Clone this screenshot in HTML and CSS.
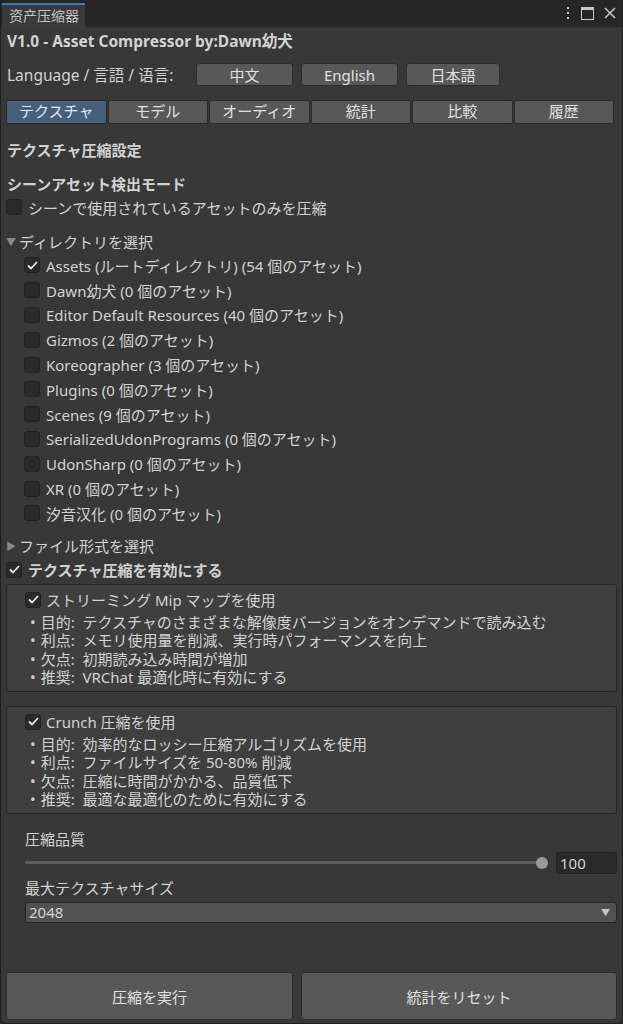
FILE: index.html
```html
<!DOCTYPE html>
<html lang="ja">
<head>
<meta charset="utf-8">
<title>资产压缩器</title>
<link rel="stylesheet" href="styles.css">
</head>
<body>
<div class="window">
  <div class="titlebar">
    <div class="wintab">资产压缩器</div>
    <div class="winctrls">
      <svg class="ico" width="6" height="14" viewBox="0 0 6 14"><rect x="2" y="1" width="2" height="2" fill="#c8c8c8"/><rect x="2" y="6" width="2" height="2" fill="#c8c8c8"/><rect x="2" y="11" width="2" height="2" fill="#c8c8c8"/></svg>
      <svg class="ico" width="13" height="13" viewBox="0 0 13 13"><rect x="0.5" y="0.5" width="12" height="12" fill="none" stroke="#c8c8c8"/><rect x="0.5" y="0.5" width="12" height="2.5" fill="#c8c8c8"/></svg>
      <svg class="ico" width="12" height="12" viewBox="0 0 12 12"><path d="M1 1 L11 11 M11 1 L1 11" stroke="#c8c8c8" stroke-width="1.5"/></svg>
    </div>
  </div>
  <div class="content">
    <div class="version">V1.0 - Asset Compressor by:Dawn幼犬</div>
    <div class="langrow">
      <span class="langlabel">Language / 言語 / 语言:</span>
      <button class="btn langbtn">中文</button>
      <button class="btn langbtn">English</button>
      <button class="btn langbtn">日本語</button>
    </div>
    <div class="tabs">
      <div class="tab active">テクスチャ</div>
      <div class="tab">モデル</div>
      <div class="tab">オーディオ</div>
      <div class="tab">統計</div>
      <div class="tab">比較</div>
      <div class="tab">履歴</div>
    </div>
    <div class="heading h1">テクスチャ圧縮設定</div>
    <div class="heading h2">シーンアセット検出モード</div>
    <label class="check row-scene"><span class="cb"></span><span>シーンで使用されているアセットのみを圧縮</span></label>
    <div class="foldout open"><span class="tri">▼</span>ディレクトリを選択</div>
    <div class="dirlist">
      <label class="check item"><span class="cb on"><svg width="11" height="9" viewBox="0 0 11 9"><path d="M1 4.5 L4 7.5 L10 1" fill="none" stroke="#e8e8e8" stroke-width="1.8"/></svg></span><span>Assets (ルートディレクトリ) (54 個のアセット)</span></label>
      <label class="check item"><span class="cb"></span><span>Dawn幼犬 (0 個のアセット)</span></label>
      <label class="check item"><span class="cb"></span><span>Editor Default Resources (40 個のアセット)</span></label>
      <label class="check item"><span class="cb"></span><span>Gizmos (2 個のアセット)</span></label>
      <label class="check item"><span class="cb"></span><span>Koreographer (3 個のアセット)</span></label>
      <label class="check item"><span class="cb"></span><span>Plugins (0 個のアセット)</span></label>
      <label class="check item"><span class="cb"></span><span>Scenes (9 個のアセット)</span></label>
      <label class="check item"><span class="cb"></span><span>SerializedUdonPrograms (0 個のアセット)</span></label>
      <label class="check item"><span class="cb"></span><span>UdonSharp (0 個のアセット)</span></label>
      <label class="check item"><span class="cb"></span><span>XR (0 個のアセット)</span></label>
      <label class="check item"><span class="cb"></span><span>汐音汉化 (0 個のアセット)</span></label>
    </div>
    <div class="foldout closed"><span class="tri">▶</span>ファイル形式を選択</div>
    <label class="check enable"><span class="cb on"><svg width="11" height="9" viewBox="0 0 11 9"><path d="M1 4.5 L4 7.5 L10 1" fill="none" stroke="#e8e8e8" stroke-width="1.8"/></svg></span><span>テクスチャ圧縮を有効にする</span></label>

    <div class="box">
      <label class="check boxcheck"><span class="cb on"><svg width="11" height="9" viewBox="0 0 11 9"><path d="M1 4.5 L4 7.5 L10 1" fill="none" stroke="#e8e8e8" stroke-width="1.8"/></svg></span><span>ストリーミング Mip マップを使用</span></label>
      <ul class="bullets">
        <li>目的:&nbsp; テクスチャのさまざまな解像度バージョンをオンデマンドで読み込む</li>
        <li>利点:&nbsp; メモリ使用量を削減、実行時パフォーマンスを向上</li>
        <li>欠点:&nbsp; 初期読み込み時間が増加</li>
        <li>推奨:&nbsp; VRChat 最適化時に有効にする</li>
      </ul>
    </div>

    <div class="box">
      <label class="check boxcheck"><span class="cb on"><svg width="11" height="9" viewBox="0 0 11 9"><path d="M1 4.5 L4 7.5 L10 1" fill="none" stroke="#e8e8e8" stroke-width="1.8"/></svg></span><span>Crunch 圧縮を使用</span></label>
      <ul class="bullets">
        <li>目的:&nbsp; 効率的なロッシー圧縮アルゴリズムを使用</li>
        <li>利点:&nbsp; ファイルサイズを 50-80% 削減</li>
        <li>欠点:&nbsp; 圧縮に時間がかかる、品質低下</li>
        <li>推奨:&nbsp; 最適な最適化のために有効にする</li>
      </ul>
    </div>

    <div class="settings">
      <div class="label">圧縮品質</div>
      <div class="sliderrow">
        <div class="slider"><div class="track"></div><div class="knob"></div></div>
        <div class="numfield">100</div>
      </div>
      <div class="label label2">最大テクスチャサイズ</div>
      <div class="dropdown"><span>2048</span><span class="arrow">▼</span></div>
    </div>

    <div class="actions">
      <button class="btn bigbtn left">圧縮を実行</button>
      <button class="btn bigbtn right">統計をリセット</button>
    </div>
  </div>
</div>
</body>
</html>
```
FILE: styles.css
```css
* { box-sizing: border-box; }
html, body { margin: 0; padding: 0; background: #2a2a2a; }
body {
  font-family: "Noto Sans", "Noto Sans CJK JP", sans-serif;
  font-size: 15px;
  color: #d2d2d2;
}
.window {
  width: 623px;
  height: 1024px;
  background: #383838;
  display: flex;
  flex-direction: column;
  border-left: 1px solid #1f1f1f;
  border-right: 1px solid #1f1f1f;
  border-bottom: 1px solid #1f1f1f;
  border-radius: 0 0 6px 6px;
  overflow: hidden;
}
.titlebar {
  height: 27px;
  background: #262626;
  display: flex;
  align-items: flex-end;
  justify-content: space-between;
  padding: 0 6px 0 1px;
  flex: none;
}
.wintab {
  height: 24px;
  width: 83px;
  background: #3a3a3a;
  border-top: 2px solid #3d78b8;
  color: #c4c4c4;
  font-size: 14px;
  font-family: "Noto Sans CJK SC", sans-serif;
  padding: 0 0 0 7px;
  line-height: 21px;
}
.winctrls {
  display: flex;
  align-items: center;
  gap: 10px;
  height: 27px;
  padding-bottom: 1px;
}
.content {
  flex: 1;
  display: flex;
  flex-direction: column;
  padding: 0 5px 3px 5px;
}
.version {
  font-weight: bold;
  font-size: 15.5px;
  margin-top: 4px;
  height: 20px;
  line-height: 20px;
  padding-left: 1px;
}
.langrow {
  display: flex;
  align-items: center;
  margin-top: 12px;
  height: 23px;
}
.langlabel { width: 190px; padding-left: 1px; font-size: 15.5px; }
.btn {
  font-family: inherit;
  background: #585858;
  color: #e0e0e0;
  border: 1px solid #2e2e2e;
  border-radius: 3px;
  font-size: 15px;
  padding: 0;
  cursor: pointer;
}
.langbtn { width: 97px; height: 23px; margin-right: 8px; line-height: 20px; }
.langbtn:last-child { width: 94px; }
.tabs {
  display: flex;
  margin-top: 14px;
  height: 24px;
  gap: 1px;
  width: 608px;
}
.tab {
  flex: 1;
  background: #585858;
  border: 1px solid #2a2a2a;
  border-radius: 2px;
  text-align: center;
  line-height: 21px;
  color: #e0e0e0;
}
.tab.active { background: #46607c; color: #e8e8e8; }
.heading { font-weight: bold; padding-left: 1px; }
.h1 { margin-top: 15px; height: 22px; line-height: 22px; }
.h2 { margin-top: 12px; height: 22px; line-height: 22px; }
.check { display: flex; align-items: center; gap: 6px; }
.cb {
  width: 16px;
  height: 16px;
  background: #2a2a2a;
  border: 1px solid #222;
  border-radius: 3px;
  display: flex;
  align-items: center;
  justify-content: center;
  flex: none;
}
.row-scene { height: 24px; }
.foldout {
  display: flex;
  align-items: center;
  height: 24px;
  color: #d2d2d2;
}
.foldout.open { margin-top: 10px; }
.tri { color: #8a8a8a; font-size: 10px; width: 13px; }
.foldout.closed { margin-top: 8px; }
.dirlist { display: flex; flex-direction: column; padding-left: 18px; }
.item { height: 24.8px; }
.enable { height: 24px; font-weight: bold; }
.box {
  margin-top: 2px;
  margin-bottom: 12px;
  background: #3f3f3f;
  border: 1px solid #262626;
  border-radius: 3px;
  padding: 5px 0 4px 18px;
}
.boxcheck { height: 20px; gap: 5px; }
.bullets {
  list-style: none;
  margin: 3px 0 0 0;
  padding: 0 0 0 5px;
  line-height: 18.5px;
}
.bullets li::before { content: "•"; margin-right: 5px; }
.settings { padding: 2px 0 0 19px; display: flex; flex-direction: column; }
.label { height: 22px; line-height: 22px; }
.sliderrow { display: flex; align-items: center; height: 24px; gap: 8px; margin-top: 1px; }
.slider { flex: 1; position: relative; height: 12px; display: flex; align-items: center; }
.track { flex: 1; height: 3px; background: #5e5e5e; border-radius: 2px; margin-right: 4px; }
.knob {
  position: absolute;
  right: 0;
  top: 0;
  width: 12px;
  height: 12px;
  border-radius: 50%;
  background: #999;
}
.numfield {
  width: 61px;
  height: 22px;
  background: #2a2a2a;
  border: 1px solid #212121;
  border-radius: 3px;
  padding-left: 3px;
  line-height: 20px;
}
.label2 { margin-top: 2px; }
.dropdown {
  margin-top: 3px;
  height: 21px;
  background: #515151;
  border: 1px solid #262626;
  border-radius: 3px;
  display: flex;
  justify-content: space-between;
  align-items: center;
  padding: 0 6px 0 3px;
}
.arrow { font-size: 9px; color: #c4c4c4; }
.actions {
  margin-top: auto;
  display: flex;
  gap: 8px;
}
.bigbtn { height: 48px; }
.bigbtn.left { width: 287px; }
.bigbtn.right { flex: 1; }
```
